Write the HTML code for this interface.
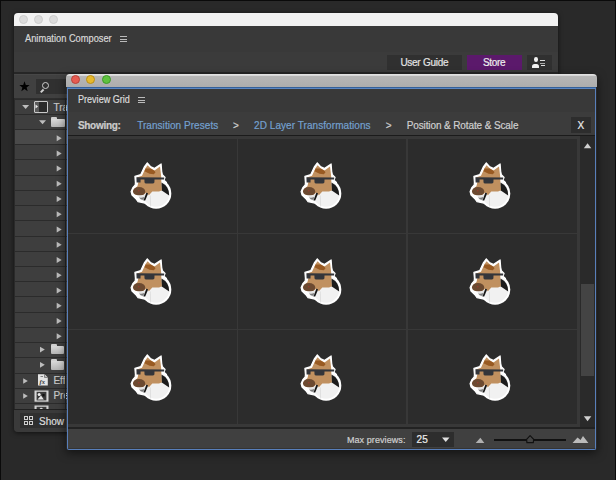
<!DOCTYPE html>
<html><head><meta charset="utf-8"><style>
*{margin:0;padding:0;box-sizing:border-box}
html,body{width:616px;height:480px;overflow:hidden;background:#292929;font-family:"Liberation Sans",sans-serif;color:#ddd;position:relative}
.a{position:absolute}
.t{position:absolute;white-space:pre;line-height:1;-webkit-text-stroke:0.2px currentColor}
.ham{position:absolute;width:7px;height:6px;border-top:1px solid #bbb;border-bottom:1px solid #bbb}
.ham:after{content:"";position:absolute;left:0;right:0;top:2px;height:1px;background:#bbb}
svg{display:block}
</style></head><body>
<div class="a" style="left:0px;top:0px;width:1.3px;height:480px;background:#0a0a0a"></div>
<div class="a" style="left:0px;top:0px;width:616px;height:1px;background:#0a0a0a"></div>
<div class="a" style="left:615px;top:0px;width:1px;height:480px;background:#0a0a0a"></div>
<div class="a" style="left:14px;top:13px;width:544px;height:419px;background:#2e2e2e;border-radius:4px;box-shadow:0 1px 5px rgba(0,0,0,.6)"></div>
<div class="a" style="left:14px;top:13px;width:544px;height:13px;background:#f2f2f2;border-radius:4px 4px 0 0"></div>
<div class="a" style="left:19.0px;top:14.5px;width:9px;height:9px;border-radius:50%;background:#dcdcdc;border:0.6px solid #cdcdcd"></div>
<div class="a" style="left:34.0px;top:14.5px;width:9px;height:9px;border-radius:50%;background:#dcdcdc;border:0.6px solid #cdcdcd"></div>
<div class="a" style="left:49.0px;top:14.5px;width:9px;height:9px;border-radius:50%;background:#dcdcdc;border:0.6px solid #cdcdcd"></div>
<div class="a" style="left:14px;top:26px;width:544px;height:26px;background:#393939"></div>
<div class="t" style="left:24.90px;top:34.40px;font-size:10px;color:#d8d8d8;transform-origin:0 0;transform:scaleX(0.9287);">Animation Composer</div>
<div class="ham" style="left:120px;top:36px"></div>
<div class="a" style="left:14px;top:52px;width:544px;height:20px;background:#3b3b3b"></div>
<div class="a" style="left:14px;top:72px;width:544px;height:1.5px;background:#262626"></div>
<div class="a" style="left:387px;top:55px;width:75px;height:15px;background:#303030"></div>
<div class="t" style="left:400.40px;top:57.60px;font-size:10px;color:#e2e2e2;letter-spacing:-0.267px;">User Guide</div>
<div class="a" style="left:467.4px;top:55px;width:54.4px;height:15px;background:#5b196b"></div>
<div class="t" style="left:483.00px;top:57.60px;font-size:10px;color:#eeeeee;letter-spacing:-0.325px;">Store</div>
<div class="a" style="left:527px;top:55px;width:25px;height:15px;background:#303030"></div>
<div class="a" style="left:533.9px;top:57.3px;width:4.4px;height:5.2px;border-radius:50%;background:#f2f2f2"></div>
<div class="a" style="left:532.4px;top:63.8px;width:7px;height:4.2px;border-radius:2.5px 2.5px 0.5px 0.5px;background:#f2f2f2"></div>
<div class="a" style="left:540px;top:60px;width:5px;height:1px;background:#ddd"></div>
<div class="a" style="left:540px;top:62.5px;width:5px;height:1px;background:#aaa"></div>
<div class="a" style="left:541px;top:65px;width:4px;height:1px;background:#ddd"></div>
<div class="a" style="left:14px;top:73.5px;width:544px;height:24.5px;background:#404040;border-top:1px solid #474747"></div>
<svg class="a" style="left:19px;top:81px" width="11" height="11" viewBox="0 0 10 10"><path d="M5 0.3 L6.2 3.6 L9.7 3.7 L6.9 5.8 L7.9 9.3 L5 7.2 L2.1 9.3 L3.1 5.8 L0.3 3.7 L3.8 3.6 Z" fill="#000"/></svg>
<div class="a" style="left:36.3px;top:78.6px;width:40px;height:15.2px;background:#303030"></div>
<div class="a" style="left:42px;top:81.5px;width:7px;height:7px;border-radius:50%;border:1.3px solid #cfcfcf"></div>
<div class="a" style="left:39.8px;top:89.8px;width:4px;height:1.5px;background:#cfcfcf;transform:rotate(-45deg)"></div>
<div class="a" style="left:14px;top:98.5px;width:54px;height:15.23px;background:#3e3e3e;border-top:1.6px solid #2b2b2b"></div>
<div class="a" style="left:14px;top:113.73px;width:54px;height:15.23px;background:#3e3e3e;border-top:1.6px solid #2b2b2b"></div>
<div class="a" style="left:14px;top:128.96px;width:54px;height:15.23px;background:#4a4a4a;border-top:1.6px solid #2b2b2b"></div>
<div class="a" style="left:14px;top:144.19px;width:54px;height:15.23px;background:#3e3e3e;border-top:1.6px solid #2b2b2b"></div>
<div class="a" style="left:14px;top:159.42000000000002px;width:54px;height:15.23px;background:#3e3e3e;border-top:1.6px solid #2b2b2b"></div>
<div class="a" style="left:14px;top:174.65px;width:54px;height:15.23px;background:#3e3e3e;border-top:1.6px solid #2b2b2b"></div>
<div class="a" style="left:14px;top:189.88px;width:54px;height:15.23px;background:#3e3e3e;border-top:1.6px solid #2b2b2b"></div>
<div class="a" style="left:14px;top:205.11px;width:54px;height:15.23px;background:#3e3e3e;border-top:1.6px solid #2b2b2b"></div>
<div class="a" style="left:14px;top:220.34px;width:54px;height:15.23px;background:#3e3e3e;border-top:1.6px solid #2b2b2b"></div>
<div class="a" style="left:14px;top:235.57px;width:54px;height:15.23px;background:#3e3e3e;border-top:1.6px solid #2b2b2b"></div>
<div class="a" style="left:14px;top:250.8px;width:54px;height:15.23px;background:#3e3e3e;border-top:1.6px solid #2b2b2b"></div>
<div class="a" style="left:14px;top:266.03px;width:54px;height:15.23px;background:#3e3e3e;border-top:1.6px solid #2b2b2b"></div>
<div class="a" style="left:14px;top:281.26px;width:54px;height:15.23px;background:#3e3e3e;border-top:1.6px solid #2b2b2b"></div>
<div class="a" style="left:14px;top:296.49px;width:54px;height:15.23px;background:#3e3e3e;border-top:1.6px solid #2b2b2b"></div>
<div class="a" style="left:14px;top:311.72px;width:54px;height:15.23px;background:#3e3e3e;border-top:1.6px solid #2b2b2b"></div>
<div class="a" style="left:14px;top:326.95000000000005px;width:54px;height:15.23px;background:#3e3e3e;border-top:1.6px solid #2b2b2b"></div>
<div class="a" style="left:14px;top:342.18px;width:54px;height:15.23px;background:#3e3e3e;border-top:1.6px solid #2b2b2b"></div>
<div class="a" style="left:14px;top:357.41px;width:54px;height:15.23px;background:#3e3e3e;border-top:1.6px solid #2b2b2b"></div>
<div class="a" style="left:14px;top:372.64px;width:54px;height:15.23px;background:#3e3e3e;border-top:1.6px solid #2b2b2b"></div>
<div class="a" style="left:14px;top:387.87px;width:54px;height:15.23px;background:#3e3e3e;border-top:1.6px solid #2b2b2b"></div>
<div class="a" style="left:14px;top:403.1px;width:54px;height:15.23px;background:#3e3e3e;border-top:1.6px solid #2b2b2b"></div>
<svg class="a" style="left:21px;top:104px" width="10" height="7"><path d="M1.10 1.00 L8.10 1.00 L4.60 5.00Z" fill="#bdbdbd"/></svg>
<div class="a" style="left:33.8px;top:101.2px;width:14px;height:11.5px;border:1px solid #c8c8c8;background:#2a2a2a;border-radius:1px"></div>
<div class="a" style="left:34.8px;top:102.2px;width:4px;height:9.5px;background:#5a5a5a"></div>
<svg class="a" style="left:34px;top:103px" width="6" height="7"><path d="M1.50 1.50 L4.00 3.50 L1.50 5.50Z" fill="#eee"/></svg>
<div class="t" style="left:53.40px;top:102.60px;font-size:10px;color:#c8c8c8;">Tra</div>
<svg class="a" style="left:38px;top:119px" width="10" height="7"><path d="M1.00 1.20 L8.00 1.20 L4.50 5.20Z" fill="#bdbdbd"/></svg>
<div class="a" style="left:51px;top:116.8px;width:6px;height:3px;background:#cfcfcf;border-radius:1px 1px 0 0"></div>
<div class="a" style="left:51px;top:118.8px;width:13.5px;height:8.5px;background:linear-gradient(#dadada,#b4b4b4);border-radius:1px"></div>
<svg class="a" style="left:55px;top:134px" width="8" height="9"><path d="M1.70 1.16 L6.70 4.16 L1.70 7.16Z" fill="#bdbdbd"/></svg>
<svg class="a" style="left:55px;top:149px" width="8" height="9"><path d="M1.70 1.39 L6.70 4.39 L1.70 7.39Z" fill="#bdbdbd"/></svg>
<svg class="a" style="left:55px;top:164px" width="8" height="9"><path d="M1.70 1.62 L6.70 4.62 L1.70 7.62Z" fill="#bdbdbd"/></svg>
<svg class="a" style="left:55px;top:179px" width="8" height="9"><path d="M1.70 1.85 L6.70 4.85 L1.70 7.85Z" fill="#bdbdbd"/></svg>
<svg class="a" style="left:55px;top:195px" width="8" height="9"><path d="M1.70 1.08 L6.70 4.08 L1.70 7.08Z" fill="#bdbdbd"/></svg>
<svg class="a" style="left:55px;top:210px" width="8" height="9"><path d="M1.70 1.31 L6.70 4.31 L1.70 7.31Z" fill="#bdbdbd"/></svg>
<svg class="a" style="left:55px;top:225px" width="8" height="9"><path d="M1.70 1.54 L6.70 4.54 L1.70 7.54Z" fill="#bdbdbd"/></svg>
<svg class="a" style="left:55px;top:240px" width="8" height="9"><path d="M1.70 1.77 L6.70 4.77 L1.70 7.77Z" fill="#bdbdbd"/></svg>
<svg class="a" style="left:55px;top:256px" width="8" height="9"><path d="M1.70 1.00 L6.70 4.00 L1.70 7.00Z" fill="#bdbdbd"/></svg>
<svg class="a" style="left:55px;top:271px" width="8" height="9"><path d="M1.70 1.23 L6.70 4.23 L1.70 7.23Z" fill="#bdbdbd"/></svg>
<svg class="a" style="left:55px;top:286px" width="8" height="9"><path d="M1.70 1.46 L6.70 4.46 L1.70 7.46Z" fill="#bdbdbd"/></svg>
<svg class="a" style="left:55px;top:301px" width="8" height="9"><path d="M1.70 1.69 L6.70 4.69 L1.70 7.69Z" fill="#bdbdbd"/></svg>
<svg class="a" style="left:55px;top:316px" width="8" height="9"><path d="M1.70 1.92 L6.70 4.92 L1.70 7.92Z" fill="#bdbdbd"/></svg>
<svg class="a" style="left:55px;top:332px" width="8" height="9"><path d="M1.70 1.15 L6.70 4.15 L1.70 7.15Z" fill="#bdbdbd"/></svg>
<svg class="a" style="left:39px;top:345px" width="7" height="9"><path d="M1.00 1.68 L5.80 4.58 L1.00 7.48Z" fill="#bdbdbd"/></svg>
<div class="a" style="left:50.9px;top:343.98px;width:6px;height:3px;background:#cfcfcf;border-radius:1px 1px 0 0"></div>
<div class="a" style="left:50.9px;top:345.98px;width:13.5px;height:8.5px;background:linear-gradient(#dadada,#b4b4b4);border-radius:1px"></div>
<svg class="a" style="left:39px;top:360px" width="7" height="9"><path d="M1.00 1.91 L5.80 4.81 L1.00 7.71Z" fill="#bdbdbd"/></svg>
<div class="a" style="left:50.9px;top:359.21000000000004px;width:6px;height:3px;background:#cfcfcf;border-radius:1px 1px 0 0"></div>
<div class="a" style="left:50.9px;top:361.21000000000004px;width:13.5px;height:8.5px;background:linear-gradient(#dadada,#b4b4b4);border-radius:1px"></div>
<svg class="a" style="left:22px;top:377px" width="7" height="8"><path d="M1.20 1.14 L5.80 3.89 L1.20 6.64Z" fill="#bdbdbd"/></svg>
<div class="t" style="left:53.40px;top:376.14px;font-size:10px;color:#c8c8c8;">Eff</div>
<svg class="a" style="left:22px;top:392px" width="7" height="8"><path d="M1.20 1.37 L5.80 4.12 L1.20 6.87Z" fill="#bdbdbd"/></svg>
<div class="t" style="left:53.40px;top:391.37px;font-size:10px;color:#c8c8c8;">Pre</div>
<svg class="a" style="left:37px;top:373.14px" width="12" height="13" viewBox="0 0 12 13"><path d="M1 1.2 L7.5 1.2 L10.8 4.5 L10.8 12.6 L1 12.6 Z" fill="#e4e4e4"/><path d="M7.5 1.2 L7.5 4.5 L10.8 4.5" fill="#bdbdbd" stroke="#555" stroke-width="0.6"/><text x="2.6" y="10.8" font-family="Liberation Serif" font-style="italic" font-weight="bold" font-size="6.5" fill="#333">fx</text><path d="M3.5 3.5 L6 3.5" stroke="#666" stroke-width="0.8"/></svg>
<svg class="a" style="left:33.5px;top:389.67px" width="15" height="12" viewBox="0 0 15 12"><rect x="0.5" y="0.5" width="14" height="11.2" fill="#d6d6d6"/><rect x="2.6" y="1.8" width="9.8" height="8.6" fill="#3a3a3a"/><circle cx="5.2" cy="4.4" r="1.5" fill="#eee"/><path d="M3.5 9.6 L7 5.6 L9.8 9.6 Z" fill="#e6e6e6"/><rect x="8.4" y="4" width="2.2" height="2.4" fill="#111"/></svg>
<svg class="a" style="left:33.5px;top:404.90px" width="15" height="5" viewBox="0 0 15 5"><rect x="0.5" y="0.5" width="14" height="5" fill="#cfcfcf"/><rect x="2.6" y="1.8" width="9.8" height="4" fill="#3a3a3a"/><path d="M5 4.5 L7 2.5 L10 4.5Z" fill="#ddd"/></svg>
<div class="a" style="left:14px;top:98px;width:1.2px;height:311px;background:#2a2a2a"></div>
<div class="a" style="left:65.4px;top:98px;width:1px;height:311px;background:#262626"></div>
<div class="a" style="left:14px;top:408.8px;width:54px;height:23.2px;background:#3a3a3a;border-radius:0 0 0 4px"></div>
<div class="a" style="left:14px;top:408.6px;width:54px;height:1.3px;background:#202020"></div>
<div class="a" style="left:20.2px;top:412.5px;width:46px;height:15px;background:#2f2f2f"></div>
<div class="a" style="left:24px;top:416px;width:4px;height:4px;border:1px solid #cfcfcf"></div>
<div class="a" style="left:24px;top:420.6px;width:4px;height:4px;border:1px solid #cfcfcf"></div>
<div class="a" style="left:29px;top:416px;width:4px;height:4px;border:1px solid #cfcfcf"></div>
<div class="a" style="left:29px;top:420.6px;width:4px;height:4px;border:1px solid #cfcfcf"></div>
<div class="t" style="left:39.00px;top:416.60px;font-size:10px;color:#dddddd;">Show</div>
<div class="a" style="left:66px;top:73.5px;width:531px;height:376.3px;box-shadow:0 3px 10px rgba(0,0,0,.55);border-radius:4px 4px 2px 2px"></div>
<div class="a" style="left:66px;top:73.5px;width:531px;height:13.5px;background:linear-gradient(#e6e6e6 0,#d6d6d6 1.5px,#b6b6b6 2.5px,#adadad 100%);border-radius:4px 4px 0 0"></div>
<div class="a" style="left:71.1px;top:75px;width:9.4px;height:9.4px;border-radius:50%;background:#e65c52;border:0.7px solid #b8433b"></div>
<div class="a" style="left:86.1px;top:75px;width:9.4px;height:9.4px;border-radius:50%;background:#e6b82c;border:0.7px solid #b98f1a"></div>
<div class="a" style="left:101.6px;top:75px;width:9.4px;height:9.4px;border-radius:50%;background:#5fc23f;border:0.7px solid #3f9a2a"></div>
<div class="a" style="left:67px;top:87px;width:529px;height:362.8px;background:#343434;border:1.3px solid #587fbb;border-top:2px solid #4a7bc0;border-radius:0 0 2px 2px"></div>
<div class="a" style="left:67px;top:87px;width:529px;height:1px;background:#34609a"></div>
<div class="a" style="left:67px;top:88px;width:529px;height:1px;background:#5a86c2"></div>
<div class="a" style="left:68.3px;top:89px;width:527px;height:23px;background:#393939"></div>
<div class="t" style="left:77.90px;top:94.70px;font-size:10px;color:#dcdcdc;transform-origin:0 0;transform:scaleX(0.9053);">Preview Grid</div>
<div class="ham" style="left:138px;top:97px"></div>
<div class="a" style="left:68.3px;top:112px;width:527px;height:23px;background:#3c3c3c"></div>
<div class="t" style="left:77.90px;top:120.60px;font-size:10px;color:#cccccc;font-weight:700;letter-spacing:-0.286px;">Showing:</div>
<div class="t" style="left:137.20px;top:120.80px;font-size:10px;color:#74a0cf;letter-spacing:0.047px;">Transition Presets</div>
<div class="t" style="left:233.00px;top:120.80px;font-size:10px;color:#cfcfcf;">&gt;</div>
<div class="t" style="left:254.00px;top:120.80px;font-size:10px;color:#74a0cf;letter-spacing:0.065px;">2D Layer Transformations</div>
<div class="t" style="left:385.70px;top:120.80px;font-size:10px;color:#cfcfcf;">&gt;</div>
<div class="t" style="left:406.70px;top:120.80px;font-size:10px;color:#cfcfcf;letter-spacing:-0.113px;">Position &amp; Rotate &amp; Scale</div>
<div class="a" style="left:570.7px;top:116.8px;width:20px;height:16.2px;background:#2d2d2d"></div>
<div class="t" style="left:577.50px;top:120.80px;font-size:10px;color:#eeeeee;">X</div>
<div class="a" style="left:68.3px;top:135px;width:527px;height:1px;background:#1b1b1b"></div>
<div class="a" style="left:68.3px;top:136px;width:512px;height:292px;background:#383838"></div>
<div class="a" style="left:68.3px;top:138.6px;width:168.7px;height:94.9px;background:#2c2c2c"></div>
<div class="a" style="left:68.3px;top:234.3px;width:168.7px;height:95.1px;background:#2c2c2c"></div>
<div class="a" style="left:68.3px;top:330px;width:168.7px;height:93.8px;background:#2c2c2c"></div>
<div class="a" style="left:238px;top:138.6px;width:168.2px;height:94.9px;background:#2c2c2c"></div>
<div class="a" style="left:238px;top:234.3px;width:168.2px;height:95.1px;background:#2c2c2c"></div>
<div class="a" style="left:238px;top:330px;width:168.2px;height:93.8px;background:#2c2c2c"></div>
<div class="a" style="left:407.6px;top:138.6px;width:169.4px;height:94.9px;background:#2c2c2c"></div>
<div class="a" style="left:407.6px;top:234.3px;width:169.4px;height:95.1px;background:#2c2c2c"></div>
<div class="a" style="left:407.6px;top:330px;width:169.4px;height:93.8px;background:#2c2c2c"></div>
<div class="a" style="left:579.5px;top:136px;width:15.5px;height:292px;background:#2a2a2a"></div>
<div class="a" style="left:581px;top:283.8px;width:13px;height:92.2px;background:#444"></div>
<svg class="a" style="left:582px;top:142px" width="11" height="8"><path d="M1.80 6.20 L9.30 6.20 L5.55 1.20Z" fill="#d0d0d0"/></svg>
<svg class="a" style="left:582px;top:415px" width="11" height="8"><path d="M1.80 1.20 L9.30 1.20 L5.55 6.20Z" fill="#d0d0d0"/></svg>
<div class="a" style="left:68.3px;top:427px;width:527px;height:1.8px;background:#222222"></div>
<div class="a" style="left:68.3px;top:428.8px;width:527px;height:19.2px;background:#404040"></div>
<div class="t" style="left:346.90px;top:435.50px;font-size:9px;color:#cfcfcf;letter-spacing:0.083px;">Max previews:</div>
<div class="a" style="left:411.7px;top:432.2px;width:42.2px;height:14.4px;background:#2d2d2d"></div>
<div class="t" style="left:416.60px;top:434.50px;font-size:10px;color:#eeeeee;">25</div>
<svg class="a" style="left:441px;top:436px" width="10" height="8"><path d="M1.00 1.50 L8.50 1.50 L4.75 6.00Z" fill="#e0e0e0"/></svg>
<svg class="a" style="left:470px;top:430px" width="125" height="18" viewBox="470 430 125 18"><path d="M475.7 442.9 L480.4 437.8 L484.3 442.9 Z" fill="#b0b0b0"/><rect x="494" y="439" width="72" height="2" fill="#111"/><path d="M526.9 442.6 L526.6 439.3 L530.1 435.6 L533.7 439.3 L533.3 442.6 Z" fill="#444" stroke="#111" stroke-width="1.2" stroke-linejoin="round"/><path d="M572.5 443 L577.5 437.5 L580.5 440 L583 436 L588.4 443 Z" fill="#bbb"/></svg>
<div class="a" style="left:128.0px;top:158.0px;width:48px;height:56px"><svg width="48" height="56" viewBox="0 0 48 56">
<path d="M19.3 4.8 L22.4 8.5 L26.3 10.4 L33.1 5.9 L33.7 13.3 L34.4 16.8 L37.1 19.4 L36 22.3 L38.5 24.5 L24 40 L17 45.2 L10 43.6 L8.2 41.2 L4 37 L3.1 33.5 L5 29.3 L7.2 27 L7.4 24.4 L6.9 18.4 L12.8 16.6 L16.5 8.6 Z" fill="#fff" stroke="#fff" stroke-width="1.2" stroke-linejoin="round"/>
<circle cx="28.1" cy="35.5" r="15.2" fill="#fff"/>
<circle cx="28.1" cy="35.5" r="13.2" fill="#f1f1f1"/>
<path d="M33.4 32.3 L41.2 37.6 A13.2 13.2 0 0 0 33.4 24.6 Z" fill="#1c1c1c"/>
<path d="M19.6 7.3 L22.6 10.3 L26.5 12.4 L32 8.4 L32.6 13.6 L33.2 18.5 L33.4 27.5 L34 32.3 L31 33.4 L24.3 33.4 L20.9 37.2 L18.5 34.5 L15 37 L7 36.5 L5.4 32.5 L9.5 28 L10.3 24.6 L9 19.4 L14 17.8 L17.6 10 Z" fill="#c0905f"/>
<path d="M17.6 10.4 L22.6 10.6 L26.5 12.8 L27.5 14.2 L25.8 16.2 L21.5 15.8 L16.5 13.2 Z" fill="#985a22"/>
<path d="M8.4 19.2 L36.2 19.4 L36.1 21.5 L26.5 21.5 L26.4 24.4 Q26 25.4 24.6 25.4 L18.2 25.4 Q16.6 25.4 16.5 24.2 L16.4 21.5 L12.6 21.5 L12.5 24.5 L8.6 24.5 Z" fill="#33353a"/>
<path d="M4.9 33.6 Q5.2 29 11 28.9 Q16.6 29 17.3 33.2 Q17.4 37.3 11.8 37.4 Q5.4 37.6 4.9 33.6 Z" fill="#6c4a31"/>
<circle cx="10.8" cy="32.8" r="0.7" fill="#a03a30"/>
<path d="M10.2 37.2 Q14 38.3 17.7 36 L16.7 42.4 Q12 43.3 10.2 37.2 Z" fill="#e6e6e6"/>
<path d="M11.2 39.4 Q13.6 40.3 16 39.1 L15.7 41.7 Q12.8 42.2 11.2 39.4Z" fill="#7c7c7c"/>
<path d="M18.4 34.4 L15.5 42.6 L17.2 42.6 L20.1 35.4 Z" fill="#151515"/>
<path d="M22.3 37.5 L22.6 48.5" stroke="#d2d2d2" stroke-width="0.6"/>
</svg>
</div>
<div class="a" style="left:128.0px;top:254.0px;width:48px;height:56px"><svg width="48" height="56" viewBox="0 0 48 56">
<path d="M19.3 4.8 L22.4 8.5 L26.3 10.4 L33.1 5.9 L33.7 13.3 L34.4 16.8 L37.1 19.4 L36 22.3 L38.5 24.5 L24 40 L17 45.2 L10 43.6 L8.2 41.2 L4 37 L3.1 33.5 L5 29.3 L7.2 27 L7.4 24.4 L6.9 18.4 L12.8 16.6 L16.5 8.6 Z" fill="#fff" stroke="#fff" stroke-width="1.2" stroke-linejoin="round"/>
<circle cx="28.1" cy="35.5" r="15.2" fill="#fff"/>
<circle cx="28.1" cy="35.5" r="13.2" fill="#f1f1f1"/>
<path d="M33.4 32.3 L41.2 37.6 A13.2 13.2 0 0 0 33.4 24.6 Z" fill="#1c1c1c"/>
<path d="M19.6 7.3 L22.6 10.3 L26.5 12.4 L32 8.4 L32.6 13.6 L33.2 18.5 L33.4 27.5 L34 32.3 L31 33.4 L24.3 33.4 L20.9 37.2 L18.5 34.5 L15 37 L7 36.5 L5.4 32.5 L9.5 28 L10.3 24.6 L9 19.4 L14 17.8 L17.6 10 Z" fill="#c0905f"/>
<path d="M17.6 10.4 L22.6 10.6 L26.5 12.8 L27.5 14.2 L25.8 16.2 L21.5 15.8 L16.5 13.2 Z" fill="#985a22"/>
<path d="M8.4 19.2 L36.2 19.4 L36.1 21.5 L26.5 21.5 L26.4 24.4 Q26 25.4 24.6 25.4 L18.2 25.4 Q16.6 25.4 16.5 24.2 L16.4 21.5 L12.6 21.5 L12.5 24.5 L8.6 24.5 Z" fill="#33353a"/>
<path d="M4.9 33.6 Q5.2 29 11 28.9 Q16.6 29 17.3 33.2 Q17.4 37.3 11.8 37.4 Q5.4 37.6 4.9 33.6 Z" fill="#6c4a31"/>
<circle cx="10.8" cy="32.8" r="0.7" fill="#a03a30"/>
<path d="M10.2 37.2 Q14 38.3 17.7 36 L16.7 42.4 Q12 43.3 10.2 37.2 Z" fill="#e6e6e6"/>
<path d="M11.2 39.4 Q13.6 40.3 16 39.1 L15.7 41.7 Q12.8 42.2 11.2 39.4Z" fill="#7c7c7c"/>
<path d="M18.4 34.4 L15.5 42.6 L17.2 42.6 L20.1 35.4 Z" fill="#151515"/>
<path d="M22.3 37.5 L22.6 48.5" stroke="#d2d2d2" stroke-width="0.6"/>
</svg>
</div>
<div class="a" style="left:128.0px;top:350.0px;width:48px;height:56px"><svg width="48" height="56" viewBox="0 0 48 56">
<path d="M19.3 4.8 L22.4 8.5 L26.3 10.4 L33.1 5.9 L33.7 13.3 L34.4 16.8 L37.1 19.4 L36 22.3 L38.5 24.5 L24 40 L17 45.2 L10 43.6 L8.2 41.2 L4 37 L3.1 33.5 L5 29.3 L7.2 27 L7.4 24.4 L6.9 18.4 L12.8 16.6 L16.5 8.6 Z" fill="#fff" stroke="#fff" stroke-width="1.2" stroke-linejoin="round"/>
<circle cx="28.1" cy="35.5" r="15.2" fill="#fff"/>
<circle cx="28.1" cy="35.5" r="13.2" fill="#f1f1f1"/>
<path d="M33.4 32.3 L41.2 37.6 A13.2 13.2 0 0 0 33.4 24.6 Z" fill="#1c1c1c"/>
<path d="M19.6 7.3 L22.6 10.3 L26.5 12.4 L32 8.4 L32.6 13.6 L33.2 18.5 L33.4 27.5 L34 32.3 L31 33.4 L24.3 33.4 L20.9 37.2 L18.5 34.5 L15 37 L7 36.5 L5.4 32.5 L9.5 28 L10.3 24.6 L9 19.4 L14 17.8 L17.6 10 Z" fill="#c0905f"/>
<path d="M17.6 10.4 L22.6 10.6 L26.5 12.8 L27.5 14.2 L25.8 16.2 L21.5 15.8 L16.5 13.2 Z" fill="#985a22"/>
<path d="M8.4 19.2 L36.2 19.4 L36.1 21.5 L26.5 21.5 L26.4 24.4 Q26 25.4 24.6 25.4 L18.2 25.4 Q16.6 25.4 16.5 24.2 L16.4 21.5 L12.6 21.5 L12.5 24.5 L8.6 24.5 Z" fill="#33353a"/>
<path d="M4.9 33.6 Q5.2 29 11 28.9 Q16.6 29 17.3 33.2 Q17.4 37.3 11.8 37.4 Q5.4 37.6 4.9 33.6 Z" fill="#6c4a31"/>
<circle cx="10.8" cy="32.8" r="0.7" fill="#a03a30"/>
<path d="M10.2 37.2 Q14 38.3 17.7 36 L16.7 42.4 Q12 43.3 10.2 37.2 Z" fill="#e6e6e6"/>
<path d="M11.2 39.4 Q13.6 40.3 16 39.1 L15.7 41.7 Q12.8 42.2 11.2 39.4Z" fill="#7c7c7c"/>
<path d="M18.4 34.4 L15.5 42.6 L17.2 42.6 L20.1 35.4 Z" fill="#151515"/>
<path d="M22.3 37.5 L22.6 48.5" stroke="#d2d2d2" stroke-width="0.6"/>
</svg>
</div>
<div class="a" style="left:297.7px;top:158.0px;width:48px;height:56px"><svg width="48" height="56" viewBox="0 0 48 56">
<path d="M19.3 4.8 L22.4 8.5 L26.3 10.4 L33.1 5.9 L33.7 13.3 L34.4 16.8 L37.1 19.4 L36 22.3 L38.5 24.5 L24 40 L17 45.2 L10 43.6 L8.2 41.2 L4 37 L3.1 33.5 L5 29.3 L7.2 27 L7.4 24.4 L6.9 18.4 L12.8 16.6 L16.5 8.6 Z" fill="#fff" stroke="#fff" stroke-width="1.2" stroke-linejoin="round"/>
<circle cx="28.1" cy="35.5" r="15.2" fill="#fff"/>
<circle cx="28.1" cy="35.5" r="13.2" fill="#f1f1f1"/>
<path d="M33.4 32.3 L41.2 37.6 A13.2 13.2 0 0 0 33.4 24.6 Z" fill="#1c1c1c"/>
<path d="M19.6 7.3 L22.6 10.3 L26.5 12.4 L32 8.4 L32.6 13.6 L33.2 18.5 L33.4 27.5 L34 32.3 L31 33.4 L24.3 33.4 L20.9 37.2 L18.5 34.5 L15 37 L7 36.5 L5.4 32.5 L9.5 28 L10.3 24.6 L9 19.4 L14 17.8 L17.6 10 Z" fill="#c0905f"/>
<path d="M17.6 10.4 L22.6 10.6 L26.5 12.8 L27.5 14.2 L25.8 16.2 L21.5 15.8 L16.5 13.2 Z" fill="#985a22"/>
<path d="M8.4 19.2 L36.2 19.4 L36.1 21.5 L26.5 21.5 L26.4 24.4 Q26 25.4 24.6 25.4 L18.2 25.4 Q16.6 25.4 16.5 24.2 L16.4 21.5 L12.6 21.5 L12.5 24.5 L8.6 24.5 Z" fill="#33353a"/>
<path d="M4.9 33.6 Q5.2 29 11 28.9 Q16.6 29 17.3 33.2 Q17.4 37.3 11.8 37.4 Q5.4 37.6 4.9 33.6 Z" fill="#6c4a31"/>
<circle cx="10.8" cy="32.8" r="0.7" fill="#a03a30"/>
<path d="M10.2 37.2 Q14 38.3 17.7 36 L16.7 42.4 Q12 43.3 10.2 37.2 Z" fill="#e6e6e6"/>
<path d="M11.2 39.4 Q13.6 40.3 16 39.1 L15.7 41.7 Q12.8 42.2 11.2 39.4Z" fill="#7c7c7c"/>
<path d="M18.4 34.4 L15.5 42.6 L17.2 42.6 L20.1 35.4 Z" fill="#151515"/>
<path d="M22.3 37.5 L22.6 48.5" stroke="#d2d2d2" stroke-width="0.6"/>
</svg>
</div>
<div class="a" style="left:297.7px;top:254.0px;width:48px;height:56px"><svg width="48" height="56" viewBox="0 0 48 56">
<path d="M19.3 4.8 L22.4 8.5 L26.3 10.4 L33.1 5.9 L33.7 13.3 L34.4 16.8 L37.1 19.4 L36 22.3 L38.5 24.5 L24 40 L17 45.2 L10 43.6 L8.2 41.2 L4 37 L3.1 33.5 L5 29.3 L7.2 27 L7.4 24.4 L6.9 18.4 L12.8 16.6 L16.5 8.6 Z" fill="#fff" stroke="#fff" stroke-width="1.2" stroke-linejoin="round"/>
<circle cx="28.1" cy="35.5" r="15.2" fill="#fff"/>
<circle cx="28.1" cy="35.5" r="13.2" fill="#f1f1f1"/>
<path d="M33.4 32.3 L41.2 37.6 A13.2 13.2 0 0 0 33.4 24.6 Z" fill="#1c1c1c"/>
<path d="M19.6 7.3 L22.6 10.3 L26.5 12.4 L32 8.4 L32.6 13.6 L33.2 18.5 L33.4 27.5 L34 32.3 L31 33.4 L24.3 33.4 L20.9 37.2 L18.5 34.5 L15 37 L7 36.5 L5.4 32.5 L9.5 28 L10.3 24.6 L9 19.4 L14 17.8 L17.6 10 Z" fill="#c0905f"/>
<path d="M17.6 10.4 L22.6 10.6 L26.5 12.8 L27.5 14.2 L25.8 16.2 L21.5 15.8 L16.5 13.2 Z" fill="#985a22"/>
<path d="M8.4 19.2 L36.2 19.4 L36.1 21.5 L26.5 21.5 L26.4 24.4 Q26 25.4 24.6 25.4 L18.2 25.4 Q16.6 25.4 16.5 24.2 L16.4 21.5 L12.6 21.5 L12.5 24.5 L8.6 24.5 Z" fill="#33353a"/>
<path d="M4.9 33.6 Q5.2 29 11 28.9 Q16.6 29 17.3 33.2 Q17.4 37.3 11.8 37.4 Q5.4 37.6 4.9 33.6 Z" fill="#6c4a31"/>
<circle cx="10.8" cy="32.8" r="0.7" fill="#a03a30"/>
<path d="M10.2 37.2 Q14 38.3 17.7 36 L16.7 42.4 Q12 43.3 10.2 37.2 Z" fill="#e6e6e6"/>
<path d="M11.2 39.4 Q13.6 40.3 16 39.1 L15.7 41.7 Q12.8 42.2 11.2 39.4Z" fill="#7c7c7c"/>
<path d="M18.4 34.4 L15.5 42.6 L17.2 42.6 L20.1 35.4 Z" fill="#151515"/>
<path d="M22.3 37.5 L22.6 48.5" stroke="#d2d2d2" stroke-width="0.6"/>
</svg>
</div>
<div class="a" style="left:297.7px;top:350.0px;width:48px;height:56px"><svg width="48" height="56" viewBox="0 0 48 56">
<path d="M19.3 4.8 L22.4 8.5 L26.3 10.4 L33.1 5.9 L33.7 13.3 L34.4 16.8 L37.1 19.4 L36 22.3 L38.5 24.5 L24 40 L17 45.2 L10 43.6 L8.2 41.2 L4 37 L3.1 33.5 L5 29.3 L7.2 27 L7.4 24.4 L6.9 18.4 L12.8 16.6 L16.5 8.6 Z" fill="#fff" stroke="#fff" stroke-width="1.2" stroke-linejoin="round"/>
<circle cx="28.1" cy="35.5" r="15.2" fill="#fff"/>
<circle cx="28.1" cy="35.5" r="13.2" fill="#f1f1f1"/>
<path d="M33.4 32.3 L41.2 37.6 A13.2 13.2 0 0 0 33.4 24.6 Z" fill="#1c1c1c"/>
<path d="M19.6 7.3 L22.6 10.3 L26.5 12.4 L32 8.4 L32.6 13.6 L33.2 18.5 L33.4 27.5 L34 32.3 L31 33.4 L24.3 33.4 L20.9 37.2 L18.5 34.5 L15 37 L7 36.5 L5.4 32.5 L9.5 28 L10.3 24.6 L9 19.4 L14 17.8 L17.6 10 Z" fill="#c0905f"/>
<path d="M17.6 10.4 L22.6 10.6 L26.5 12.8 L27.5 14.2 L25.8 16.2 L21.5 15.8 L16.5 13.2 Z" fill="#985a22"/>
<path d="M8.4 19.2 L36.2 19.4 L36.1 21.5 L26.5 21.5 L26.4 24.4 Q26 25.4 24.6 25.4 L18.2 25.4 Q16.6 25.4 16.5 24.2 L16.4 21.5 L12.6 21.5 L12.5 24.5 L8.6 24.5 Z" fill="#33353a"/>
<path d="M4.9 33.6 Q5.2 29 11 28.9 Q16.6 29 17.3 33.2 Q17.4 37.3 11.8 37.4 Q5.4 37.6 4.9 33.6 Z" fill="#6c4a31"/>
<circle cx="10.8" cy="32.8" r="0.7" fill="#a03a30"/>
<path d="M10.2 37.2 Q14 38.3 17.7 36 L16.7 42.4 Q12 43.3 10.2 37.2 Z" fill="#e6e6e6"/>
<path d="M11.2 39.4 Q13.6 40.3 16 39.1 L15.7 41.7 Q12.8 42.2 11.2 39.4Z" fill="#7c7c7c"/>
<path d="M18.4 34.4 L15.5 42.6 L17.2 42.6 L20.1 35.4 Z" fill="#151515"/>
<path d="M22.3 37.5 L22.6 48.5" stroke="#d2d2d2" stroke-width="0.6"/>
</svg>
</div>
<div class="a" style="left:467.4px;top:158.0px;width:48px;height:56px"><svg width="48" height="56" viewBox="0 0 48 56">
<path d="M19.3 4.8 L22.4 8.5 L26.3 10.4 L33.1 5.9 L33.7 13.3 L34.4 16.8 L37.1 19.4 L36 22.3 L38.5 24.5 L24 40 L17 45.2 L10 43.6 L8.2 41.2 L4 37 L3.1 33.5 L5 29.3 L7.2 27 L7.4 24.4 L6.9 18.4 L12.8 16.6 L16.5 8.6 Z" fill="#fff" stroke="#fff" stroke-width="1.2" stroke-linejoin="round"/>
<circle cx="28.1" cy="35.5" r="15.2" fill="#fff"/>
<circle cx="28.1" cy="35.5" r="13.2" fill="#f1f1f1"/>
<path d="M33.4 32.3 L41.2 37.6 A13.2 13.2 0 0 0 33.4 24.6 Z" fill="#1c1c1c"/>
<path d="M19.6 7.3 L22.6 10.3 L26.5 12.4 L32 8.4 L32.6 13.6 L33.2 18.5 L33.4 27.5 L34 32.3 L31 33.4 L24.3 33.4 L20.9 37.2 L18.5 34.5 L15 37 L7 36.5 L5.4 32.5 L9.5 28 L10.3 24.6 L9 19.4 L14 17.8 L17.6 10 Z" fill="#c0905f"/>
<path d="M17.6 10.4 L22.6 10.6 L26.5 12.8 L27.5 14.2 L25.8 16.2 L21.5 15.8 L16.5 13.2 Z" fill="#985a22"/>
<path d="M8.4 19.2 L36.2 19.4 L36.1 21.5 L26.5 21.5 L26.4 24.4 Q26 25.4 24.6 25.4 L18.2 25.4 Q16.6 25.4 16.5 24.2 L16.4 21.5 L12.6 21.5 L12.5 24.5 L8.6 24.5 Z" fill="#33353a"/>
<path d="M4.9 33.6 Q5.2 29 11 28.9 Q16.6 29 17.3 33.2 Q17.4 37.3 11.8 37.4 Q5.4 37.6 4.9 33.6 Z" fill="#6c4a31"/>
<circle cx="10.8" cy="32.8" r="0.7" fill="#a03a30"/>
<path d="M10.2 37.2 Q14 38.3 17.7 36 L16.7 42.4 Q12 43.3 10.2 37.2 Z" fill="#e6e6e6"/>
<path d="M11.2 39.4 Q13.6 40.3 16 39.1 L15.7 41.7 Q12.8 42.2 11.2 39.4Z" fill="#7c7c7c"/>
<path d="M18.4 34.4 L15.5 42.6 L17.2 42.6 L20.1 35.4 Z" fill="#151515"/>
<path d="M22.3 37.5 L22.6 48.5" stroke="#d2d2d2" stroke-width="0.6"/>
</svg>
</div>
<div class="a" style="left:467.4px;top:254.0px;width:48px;height:56px"><svg width="48" height="56" viewBox="0 0 48 56">
<path d="M19.3 4.8 L22.4 8.5 L26.3 10.4 L33.1 5.9 L33.7 13.3 L34.4 16.8 L37.1 19.4 L36 22.3 L38.5 24.5 L24 40 L17 45.2 L10 43.6 L8.2 41.2 L4 37 L3.1 33.5 L5 29.3 L7.2 27 L7.4 24.4 L6.9 18.4 L12.8 16.6 L16.5 8.6 Z" fill="#fff" stroke="#fff" stroke-width="1.2" stroke-linejoin="round"/>
<circle cx="28.1" cy="35.5" r="15.2" fill="#fff"/>
<circle cx="28.1" cy="35.5" r="13.2" fill="#f1f1f1"/>
<path d="M33.4 32.3 L41.2 37.6 A13.2 13.2 0 0 0 33.4 24.6 Z" fill="#1c1c1c"/>
<path d="M19.6 7.3 L22.6 10.3 L26.5 12.4 L32 8.4 L32.6 13.6 L33.2 18.5 L33.4 27.5 L34 32.3 L31 33.4 L24.3 33.4 L20.9 37.2 L18.5 34.5 L15 37 L7 36.5 L5.4 32.5 L9.5 28 L10.3 24.6 L9 19.4 L14 17.8 L17.6 10 Z" fill="#c0905f"/>
<path d="M17.6 10.4 L22.6 10.6 L26.5 12.8 L27.5 14.2 L25.8 16.2 L21.5 15.8 L16.5 13.2 Z" fill="#985a22"/>
<path d="M8.4 19.2 L36.2 19.4 L36.1 21.5 L26.5 21.5 L26.4 24.4 Q26 25.4 24.6 25.4 L18.2 25.4 Q16.6 25.4 16.5 24.2 L16.4 21.5 L12.6 21.5 L12.5 24.5 L8.6 24.5 Z" fill="#33353a"/>
<path d="M4.9 33.6 Q5.2 29 11 28.9 Q16.6 29 17.3 33.2 Q17.4 37.3 11.8 37.4 Q5.4 37.6 4.9 33.6 Z" fill="#6c4a31"/>
<circle cx="10.8" cy="32.8" r="0.7" fill="#a03a30"/>
<path d="M10.2 37.2 Q14 38.3 17.7 36 L16.7 42.4 Q12 43.3 10.2 37.2 Z" fill="#e6e6e6"/>
<path d="M11.2 39.4 Q13.6 40.3 16 39.1 L15.7 41.7 Q12.8 42.2 11.2 39.4Z" fill="#7c7c7c"/>
<path d="M18.4 34.4 L15.5 42.6 L17.2 42.6 L20.1 35.4 Z" fill="#151515"/>
<path d="M22.3 37.5 L22.6 48.5" stroke="#d2d2d2" stroke-width="0.6"/>
</svg>
</div>
<div class="a" style="left:467.4px;top:350.0px;width:48px;height:56px"><svg width="48" height="56" viewBox="0 0 48 56">
<path d="M19.3 4.8 L22.4 8.5 L26.3 10.4 L33.1 5.9 L33.7 13.3 L34.4 16.8 L37.1 19.4 L36 22.3 L38.5 24.5 L24 40 L17 45.2 L10 43.6 L8.2 41.2 L4 37 L3.1 33.5 L5 29.3 L7.2 27 L7.4 24.4 L6.9 18.4 L12.8 16.6 L16.5 8.6 Z" fill="#fff" stroke="#fff" stroke-width="1.2" stroke-linejoin="round"/>
<circle cx="28.1" cy="35.5" r="15.2" fill="#fff"/>
<circle cx="28.1" cy="35.5" r="13.2" fill="#f1f1f1"/>
<path d="M33.4 32.3 L41.2 37.6 A13.2 13.2 0 0 0 33.4 24.6 Z" fill="#1c1c1c"/>
<path d="M19.6 7.3 L22.6 10.3 L26.5 12.4 L32 8.4 L32.6 13.6 L33.2 18.5 L33.4 27.5 L34 32.3 L31 33.4 L24.3 33.4 L20.9 37.2 L18.5 34.5 L15 37 L7 36.5 L5.4 32.5 L9.5 28 L10.3 24.6 L9 19.4 L14 17.8 L17.6 10 Z" fill="#c0905f"/>
<path d="M17.6 10.4 L22.6 10.6 L26.5 12.8 L27.5 14.2 L25.8 16.2 L21.5 15.8 L16.5 13.2 Z" fill="#985a22"/>
<path d="M8.4 19.2 L36.2 19.4 L36.1 21.5 L26.5 21.5 L26.4 24.4 Q26 25.4 24.6 25.4 L18.2 25.4 Q16.6 25.4 16.5 24.2 L16.4 21.5 L12.6 21.5 L12.5 24.5 L8.6 24.5 Z" fill="#33353a"/>
<path d="M4.9 33.6 Q5.2 29 11 28.9 Q16.6 29 17.3 33.2 Q17.4 37.3 11.8 37.4 Q5.4 37.6 4.9 33.6 Z" fill="#6c4a31"/>
<circle cx="10.8" cy="32.8" r="0.7" fill="#a03a30"/>
<path d="M10.2 37.2 Q14 38.3 17.7 36 L16.7 42.4 Q12 43.3 10.2 37.2 Z" fill="#e6e6e6"/>
<path d="M11.2 39.4 Q13.6 40.3 16 39.1 L15.7 41.7 Q12.8 42.2 11.2 39.4Z" fill="#7c7c7c"/>
<path d="M18.4 34.4 L15.5 42.6 L17.2 42.6 L20.1 35.4 Z" fill="#151515"/>
<path d="M22.3 37.5 L22.6 48.5" stroke="#d2d2d2" stroke-width="0.6"/>
</svg>
</div>
</body></html>
